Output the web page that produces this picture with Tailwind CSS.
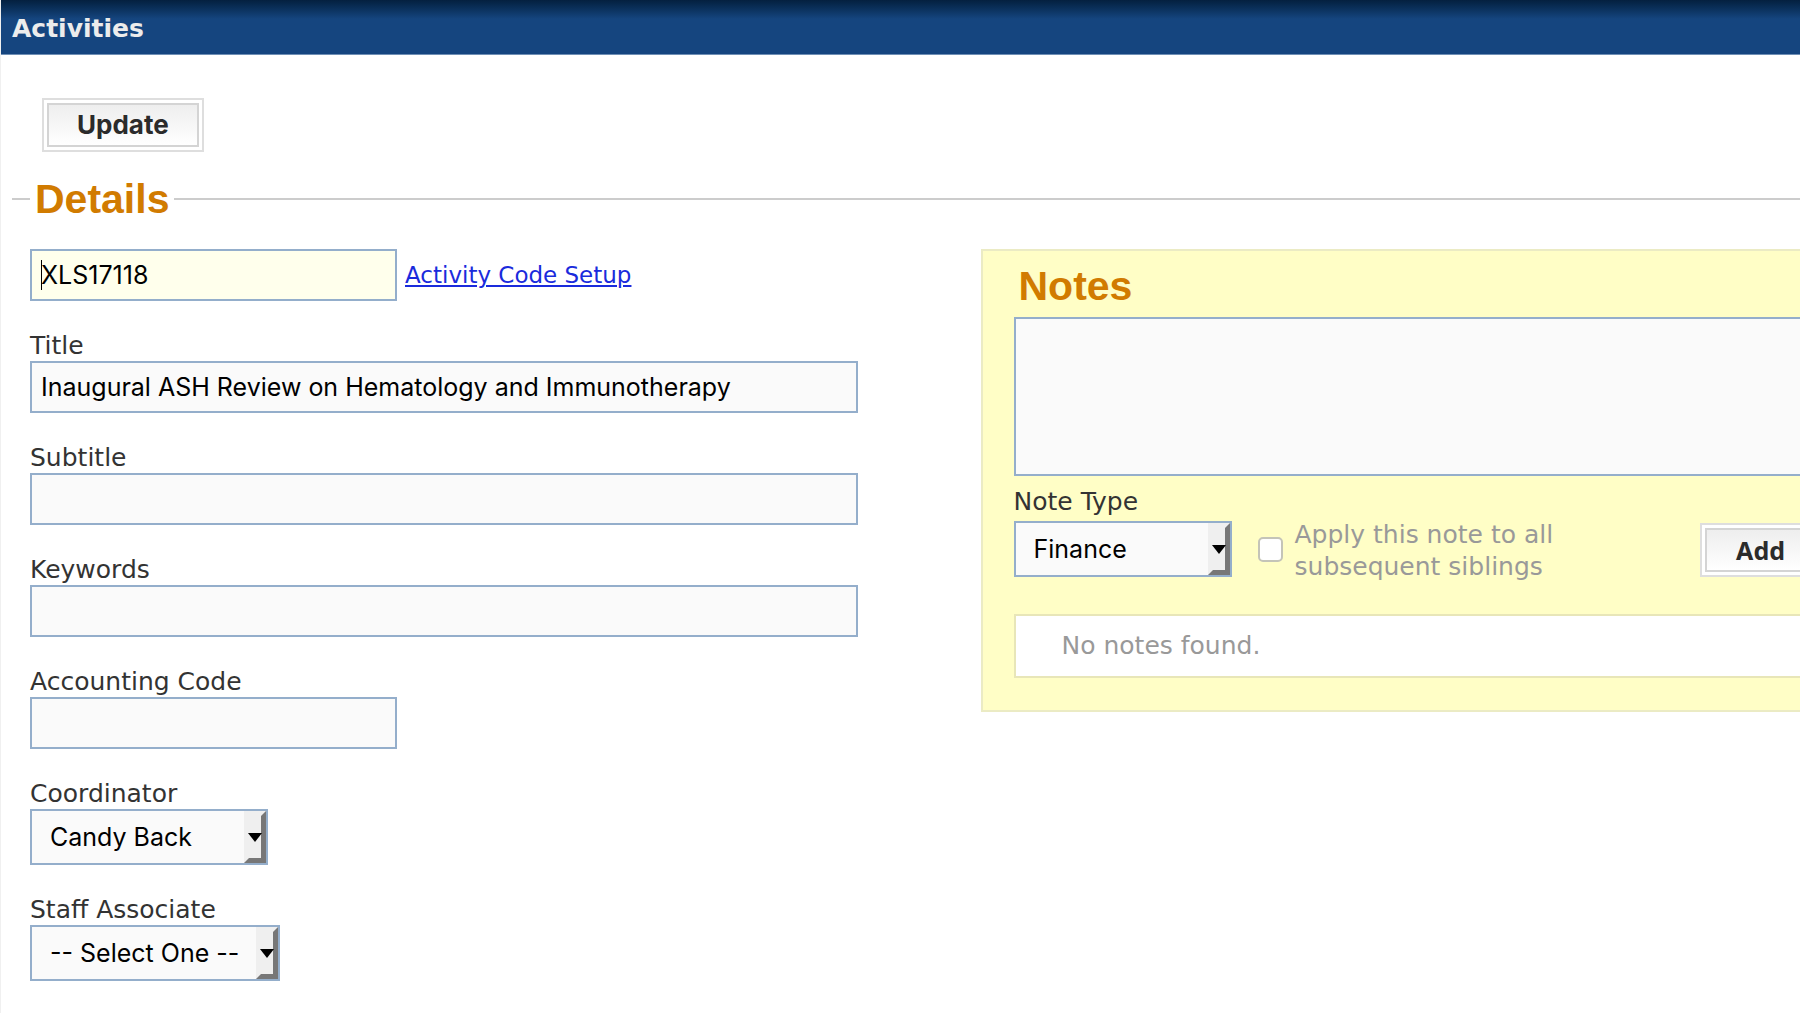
<!DOCTYPE html>
<html lang="en">
<head>
<meta charset="utf-8">
<meta name="viewport" content="width=device-width, initial-scale=1">
<title>Activities</title>
<script src="https://cdn.jsdelivr.net/npm/@tailwindcss/browser@4"></script>
</head>
<body class="min-h-screen overflow-x-hidden border-l border-[#f0f0f0] bg-white font-['DejaVu_Sans',sans-serif] text-[25px] leading-[30px] text-[#333]">
<header class="-ml-px h-[55px] border-b border-[#6f8fb5] bg-linear-to-b from-[#04203f] to-[#15457f] to-35% px-3 pt-[14px]">
  <h1 class="text-[25px] leading-[30px] font-bold text-[#ececec]">Activities</h1>
</header>
<main>
  <form>
    <div class="pt-[43px] pl-[41px]">
      <button type="submit" class="block border-2 border-[#dedede] bg-white p-[3px]">
        <span class="block border-2 border-[#d4d4d4] bg-linear-to-b from-[#eeeeee] to-white px-[28px] py-[5px] font-[Inter,sans-serif] text-[26px] leading-[30px] font-bold text-[#2b2b2b]">Update</span>
      </button>
    </div>
    <fieldset class="mt-[23px] ml-[11px] min-w-0 border-t-2 border-[#cccccc] pl-[18px]">
      <legend class="px-[5px] font-['Liberation_Sans',Arial,sans-serif] text-[41px] leading-[48px] font-bold text-[#d17b00]">Details</legend>
      <div class="-mr-[54px] grid grid-cols-[950fr_873fr] items-start pt-[26px]">
        <div class="flex flex-col gap-[30px] pr-[123px]">
          <div class="relative flex items-center gap-2">
            <input type="text" aria-label="Activity code" value="XLS17118" class="h-[52px] w-[367px] border-2 border-[#94aecb] bg-[#ffffec] px-[9px] font-[Inter,sans-serif] text-black outline-none">
            <span class="absolute top-[11px] left-[11px] h-[30px] w-px bg-black"></span>
            <a href="#setup" class="text-[23px] text-[#1a2bdc] underline decoration-2 underline-offset-2">Activity Code Setup</a>
          </div>
          <div>
            <label for="title" class="block">Title</label>
            <input id="title" type="text" value="Inaugural ASH Review on Hematology and Immunotherapy" class="block h-[52px] w-full border-2 border-[#94aecb] bg-[#fafafa] px-[9px] font-[Inter,sans-serif] text-black">
          </div>
          <div>
            <label for="subtitle" class="block">Subtitle</label>
            <input id="subtitle" type="text" class="block h-[52px] w-full border-2 border-[#94aecb] bg-[#fafafa] px-[9px] font-[Inter,sans-serif] text-black">
          </div>
          <div>
            <label for="keywords" class="block">Keywords</label>
            <input id="keywords" type="text" class="block h-[52px] w-full border-2 border-[#94aecb] bg-[#fafafa] px-[9px] font-[Inter,sans-serif] text-black">
          </div>
          <div>
            <label for="accounting" class="block">Accounting Code</label>
            <input id="accounting" type="text" class="block h-[52px] w-[367px] border-2 border-[#94aecb] bg-[#fafafa] px-[9px] font-[Inter,sans-serif] text-black">
          </div>
          <div>
            <label for="coordinator" class="block">Coordinator</label>
            <div class="relative w-[238px]">
              <select id="coordinator" class="block h-[56px] w-full appearance-none border-2 border-[#94aecb] bg-[#fafafa] pl-[18px] font-[Inter,sans-serif] text-black"><option>Candy Back</option></select>
              <span class="pointer-events-none absolute inset-y-[2px] right-[2px] flex w-[22px] items-center justify-center border-5 border-t-[#efefef] border-r-[#777] border-b-[#777] border-l-[#efefef] bg-[#efefef]"><svg class="h-[9px] w-[14px] shrink-0" viewBox="0 0 14 9"><path d="M0 0h14L7 9z"/></svg></span>
            </div>
          </div>
          <div>
            <label for="staff" class="block">Staff Associate</label>
            <div class="relative w-[250px]">
              <select id="staff" class="block h-[56px] w-full appearance-none border-2 border-[#94aecb] bg-[#fafafa] pl-[18px] font-[Inter,sans-serif] text-black"><option>-- Select One --</option></select>
              <span class="pointer-events-none absolute inset-y-[2px] right-[2px] flex w-[22px] items-center justify-center border-5 border-t-[#efefef] border-r-[#777] border-b-[#777] border-l-[#efefef] bg-[#efefef]"><svg class="h-[9px] w-[14px] shrink-0" viewBox="0 0 14 9"><path d="M0 0h14L7 9z"/></svg></span>
            </div>
          </div>
        </div>
        <section class="border-2 border-[#ebebc4] bg-[#fffec6] px-[31px] pt-[11px] pb-8">
          <h2 class="px-[5px] font-['Liberation_Sans',Arial,sans-serif] text-[41px] leading-[48px] font-bold text-[#d17b00]">Notes</h2>
          <textarea aria-label="Notes" class="mt-[7px] block h-[159px] w-full resize-none border-2 border-[#94aecb] bg-[#fafafa] p-2 font-[Inter,sans-serif] text-black"></textarea>
          <div class="mt-[11px] flex items-end">
            <div>
              <label for="notetype" class="block pb-[4px]">Note Type</label>
              <div class="relative w-[218px]">
                <select id="notetype" class="block h-[56px] w-full appearance-none border-2 border-[#94aecb] bg-[#fafafa] pl-[18px] font-[Inter,sans-serif] text-black"><option>Finance</option></select>
                <span class="pointer-events-none absolute inset-y-[2px] right-[2px] flex w-[22px] items-center justify-center border-5 border-t-[#efefef] border-r-[#777] border-b-[#777] border-l-[#efefef] bg-[#efefef]"><svg class="h-[9px] w-[14px] shrink-0" viewBox="0 0 14 9"><path d="M0 0h14L7 9z"/></svg></span>
              </div>
            </div>
            <div class="ml-[26px] flex h-[56px] items-center gap-[12px]">
              <input id="siblings" type="checkbox" class="size-[25px] appearance-none rounded-[5px] border-2 border-[#c4c4b8] bg-white">
              <label for="siblings" class="w-[290px] pt-1 leading-8 text-[#999]">Apply this note to all subsequent siblings</label>
            </div>
            <button type="button" class="ml-auto block border-2 border-[#dedede] bg-white p-[3px]">
              <span class="block border-2 border-[#d4d4d4] bg-linear-to-b from-[#eeeeee] to-white px-[29px] py-[5px] font-['Noto_Sans',sans-serif] leading-[30px] font-bold text-[#2b2b2b]">Add</span>
            </button>
          </div>
          <p class="mt-[37px] border-2 border-[#e8e6b8] bg-white px-[46px] py-[15px] text-[#999]">No notes found.</p>
        </section>
      </div>
    </fieldset>
  </form>
</main>
</body>
</html>
